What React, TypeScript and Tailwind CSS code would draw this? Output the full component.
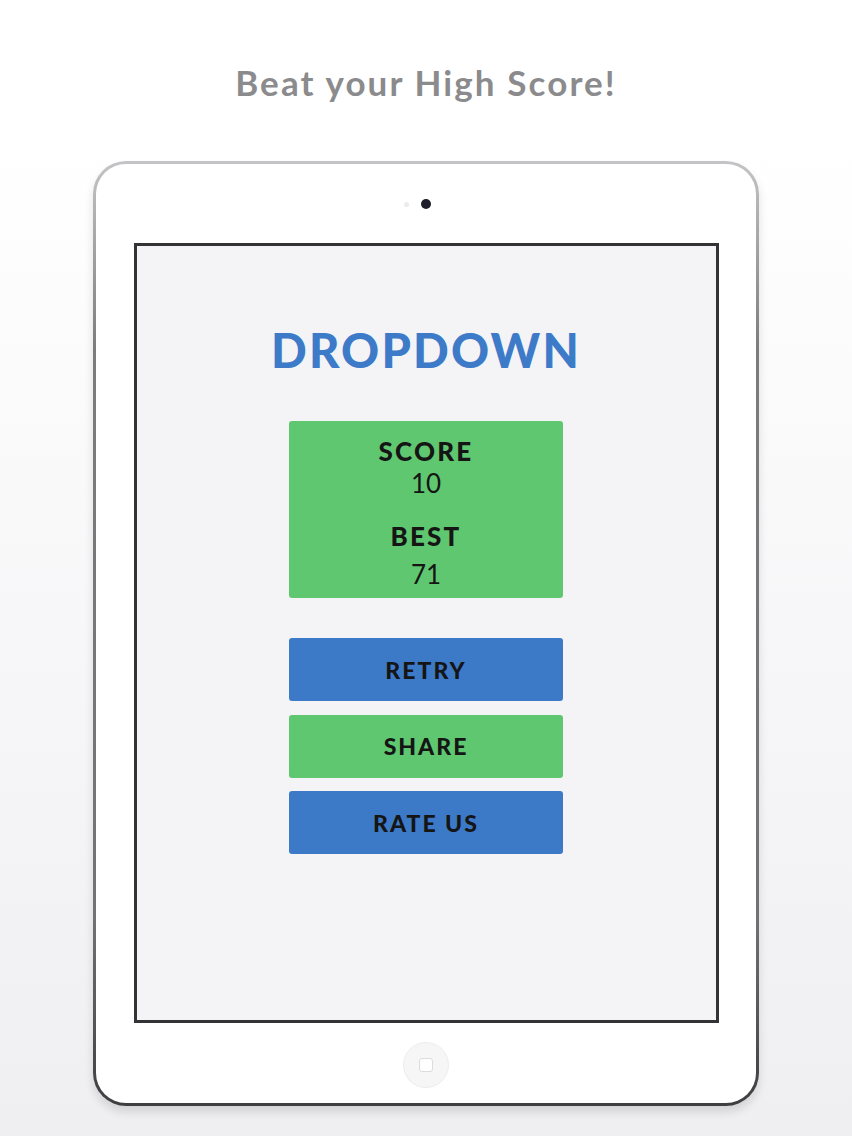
import React from "react";

const font = { fontFamily: "Lato, 'Open Sans', sans-serif" };

export default function App() {
  return (
    <div
      className="w-[852px] h-[1136px] flex flex-col items-center bg-[linear-gradient(to_bottom,#ffffff_0px,#ffffff_140px,#efeef1_1136px)]"
      style={font}
    >
      <div className="h-[161px] w-full flex justify-center pt-[60px]">
        <h1 className="text-[35px] leading-[44px] font-bold text-[#8b8b8d] tracking-[2.1px]">
          Beat your High Score!
        </h1>
      </div>

      <div className="w-[666px] h-[945px] rounded-[33px] p-[3px] bg-[linear-gradient(to_bottom,#c4c4c6_0%,#7c7c7e_20%,#727274_80%,#3e3e40_100%)] shadow-[0_6px_10px_rgba(0,0,0,0.12)]">
        <div className="w-full h-full rounded-[30px] bg-white flex flex-col items-center">
          <div className="h-[79px] w-full flex items-center justify-center gap-[12px] pt-[1px]">
            <div className="w-[5px] h-[5px] rounded-full bg-[#ececee]" />
            <div className="w-[10px] h-[10px] rounded-full bg-[#1d1d2b]" />
            <div className="w-[5px] h-[5px]" />
          </div>

          <div className="w-[585px] h-[780px] border-[3px] border-[#333336] bg-[#f4f4f6] flex flex-col items-center">
            <div className="pt-[76px] h-[175px]">
              <div className="text-[47px] leading-[56px] font-black text-[#3d7bc9] tracking-[2.2px]">
                DROPDOWN
              </div>
            </div>

            <div className="w-[274px] h-[177px] rounded-[3px] bg-[#5fc770] flex flex-col items-center text-[#151515] pt-[14px]">
              <div className="text-[26px] leading-[32px] font-black tracking-[2.2px]">SCORE</div>
              <div className="text-[26px] leading-[32px] font-normal">10</div>
              <div className="text-[26px] leading-[32px] font-black mt-[21px] tracking-[2.2px]">BEST</div>
              <div className="text-[26px] leading-[32px] font-normal mt-[6px]">71</div>
            </div>

            <div className="flex flex-col gap-[13.5px] mt-[40px]">
              <Button label="RETRY" color="bg-[#3c7ac7]" />
              <Button label="SHARE" color="bg-[#5fc770]" />
              <Button label="RATE US" color="bg-[#3c7ac7]" />
            </div>
          </div>

          <div className="flex-1 w-full flex items-center justify-center pt-[4px]">
            <div className="w-[46px] h-[46px] rounded-full bg-[#f6f6f7] border border-[#ededee] flex items-center justify-center">
              <div className="w-[14px] h-[14px] rounded-[3px] border border-[#dcdcde] bg-white" />
            </div>
          </div>
        </div>
      </div>
    </div>
  );
}

function Button({ label, color }: { label: string; color: string }) {
  return (
    <div
      className={`w-[274px] h-[63px] rounded-[3px] ${color} flex items-center justify-center text-[23px] font-black text-[#151515] tracking-[2px] pt-[1px]`}
    >
      {label}
    </div>
  );
}
